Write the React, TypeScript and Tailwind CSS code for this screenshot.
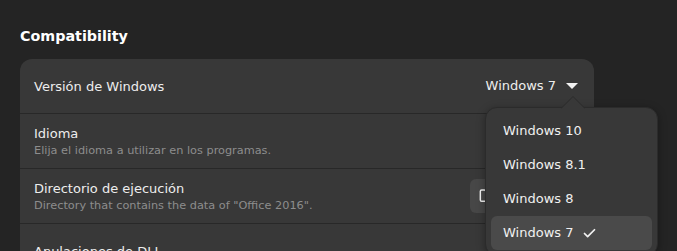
import { Check, Folder } from "lucide-react";

const versions = ["Windows 10", "Windows 8.1", "Windows 8", "Windows 7"];

function Row({
  title,
  subtitle,
  children,
  last,
}: {
  title: string;
  subtitle?: string;
  children?: React.ReactNode;
  last?: boolean;
}) {
  return (
    <div
      className={`flex h-[55px] items-center justify-between pl-[14px] pr-[14px] ${
        last ? "" : "border-b border-[#282828]"
      }`}
    >
      <div className="flex flex-col">
        <span className="text-[13px] leading-[17px] text-[#ededed]">{title}</span>
        {subtitle && (
          <span className="mt-[1px] text-[11.3px] leading-[15px] text-[#8d8d8d]">
            {subtitle}
          </span>
        )}
      </div>
      {children}
    </div>
  );
}

export default function App() {
  const selected = "Windows 7";

  return (
    <div className="relative h-[251px] w-[677px] overflow-hidden bg-[#242424] font-['DejaVu_Sans',sans-serif]">
      <div className="px-5 pt-[27px]">
        <h2 className="text-[14.3px] font-bold leading-[18px] text-white">Compatibility</h2>

        <div className="mt-[14px] w-[574px] rounded-xl bg-[#383838]">
          <Row title="Versión de Windows">
            <div className="flex items-center gap-[10px] pr-[2px]">
              <span className="text-[13px] text-[#ededed]">{selected}</span>
              <svg width="12" height="6" viewBox="0 0 12 6">
                <path d="M0 0h12L6 6z" fill="#f2f2f2" />
              </svg>
            </div>
          </Row>
          <Row title="Idioma" subtitle="Elija el idioma a utilizar en los programas." />
          <Row
            title="Directorio de ejecución"
            subtitle='Directory that contains the data of "Office 2016".'
          >
            <button className="flex h-[34px] w-[110px] items-center rounded-md bg-[#474747] pl-[9px] text-[#f2f2f2]">
              <Folder size={16} strokeWidth={2.2} />
            </button>
          </Row>
          <Row title="Anulaciones de DLL" last />
        </div>
      </div>

      {/* dropdown popover */}
      <div className="absolute left-[485px] top-[107px] w-[173px] rounded-xl border border-[#2b2b2b] bg-[#383838] px-[5px] pb-[5px] pt-[6px] shadow-[0_2px_8px_rgba(0,0,0,0.35)]">
        <svg
          className="absolute left-[75px] top-[-12px]"
          width="24"
          height="13"
          viewBox="0 0 24 13"
        >
          <path d="M0 12.5L12 0.5L24 12.5" fill="#383838" stroke="#2b2b2b" />
          <rect x="1" y="12" width="22" height="1" fill="#383838" />
        </svg>
        {versions.map((v) => (
          <div
            key={v}
            className={`flex h-[34px] items-center gap-[9px] rounded-md px-[12px] text-[13px] text-[#f0f0f0] ${
              v === selected ? "bg-[#4a4a4a]" : ""
            }`}
          >
            <span>{v}</span>
            {v === selected && <Check size={15} strokeWidth={2.8} />}
          </div>
        ))}
      </div>
    </div>
  );
}
